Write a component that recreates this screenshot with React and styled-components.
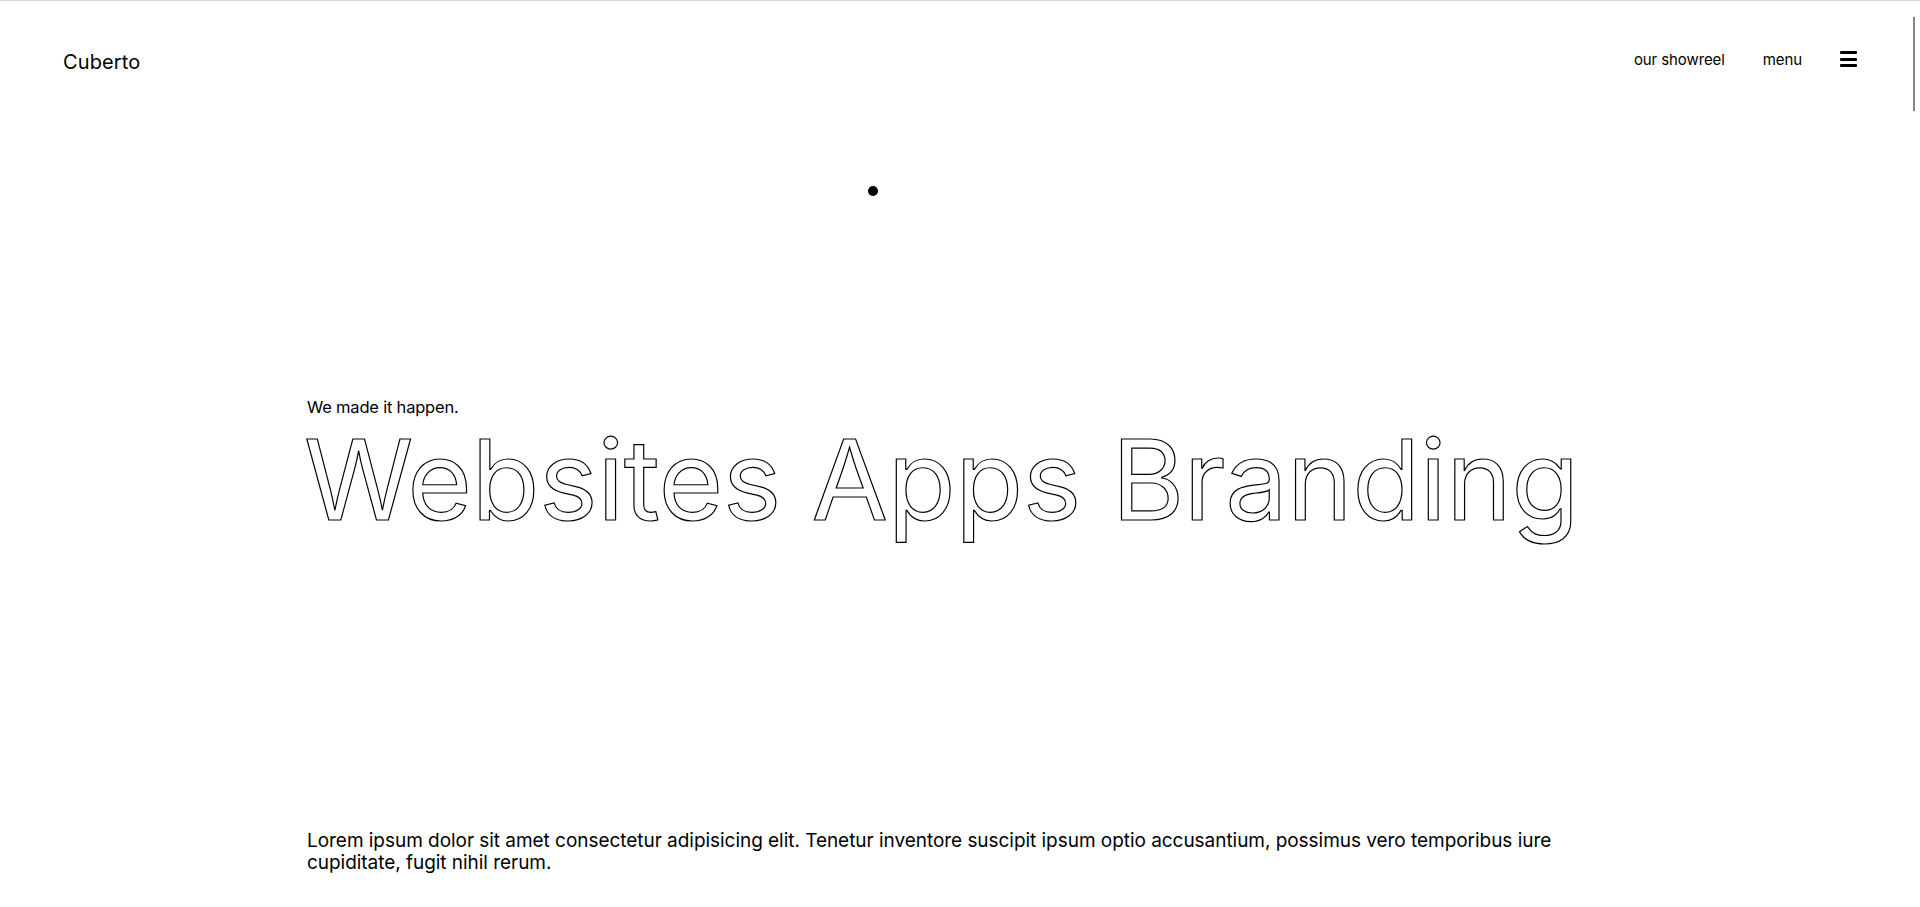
import React from 'react';
import styled, { createGlobalStyle } from 'styled-components';

const GlobalStyle = createGlobalStyle`
  html, body {
    margin: 0;
    padding: 0;
    background: #fff;
  }
  body {
    font-family: Inter, "Noto Sans", sans-serif;
    color: #000;
    border-top: 1px solid #d2d2d2;
    overflow: hidden;
  }
`;

const Page = styled.div`
  min-height: 906px;
  display: flex;
  flex-direction: column;
`;

const Header = styled.header`
  height: 120px;
  padding: 0 63px;
  display: flex;
  align-items: center;
  justify-content: space-between;
`;

const Logo = styled.a`
  font-size: 20px;
  letter-spacing: 0.1px;
  color: #000;
  text-decoration: none;
  padding-top: 2px;
`;

const Nav = styled.nav`
  display: flex;
  align-items: center;
  gap: 38px;
  padding-bottom: 4px;
`;

const NavLink = styled.a`
  font-size: 15px;
  color: #000;
  text-decoration: none;
  letter-spacing: -0.1px;
`;

const Burger = styled.button`
  width: 17px;
  height: 16px;
  padding: 0;
  border: none;
  background: transparent;
  display: flex;
  flex-direction: column;
  justify-content: space-between;
  cursor: pointer;

  span {
    display: block;
    height: 3px;
    background: #000;
    border-radius: 1px;
  }
`;

const Cursor = styled.div`
  position: absolute;
  left: 868px;
  top: 186px;
  width: 10px;
  height: 10px;
  border-radius: 50%;
  background: #000;
`;

const ScrollThumb = styled.div`
  position: fixed;
  right: 5px;
  top: 17px;
  width: 2px;
  height: 94px;
  background: #888;
`;

const Hero = styled.section`
  padding: 276px 307px 0;
`;

const Tagline = styled.p`
  margin: 0;
  font-size: 16.5px;
  line-height: 20px;
  letter-spacing: -0.2px;
`;

const Headline = styled.h1`
  margin: 7px 0 0 -3px;
  font-size: 111px;
  line-height: 1;
  font-weight: 400;
  letter-spacing: -0.45px;
  color: #fff;
  -webkit-text-stroke: 1.2px #000;
  white-space: nowrap;
`;

const Intro = styled.p`
  margin: 295px 0 0;
  max-width: 1306px;
  font-size: 19px;
  line-height: 22px;
  letter-spacing: -0.04px;
`;

export default function App() {
  return (
    <Page>
      <GlobalStyle />
      <Header>
        <Logo href="#">Cuberto</Logo>
        <Nav>
          <NavLink href="#">our showreel</NavLink>
          <NavLink href="#">menu</NavLink>
          <Burger aria-label="menu">
            <span />
            <span />
            <span />
          </Burger>
        </Nav>
      </Header>
      <Cursor />
      <ScrollThumb />
      <Hero>
        <Tagline>We made it happen.</Tagline>
        <Headline>Websites Apps Branding</Headline>
        <Intro>
          Lorem ipsum dolor sit amet consectetur adipisicing elit. Tenetur inventore suscipit ipsum optio
          accusantium, possimus vero temporibus iure cupiditate, fugit nihil rerum.
        </Intro>
      </Hero>
    </Page>
  );
}
